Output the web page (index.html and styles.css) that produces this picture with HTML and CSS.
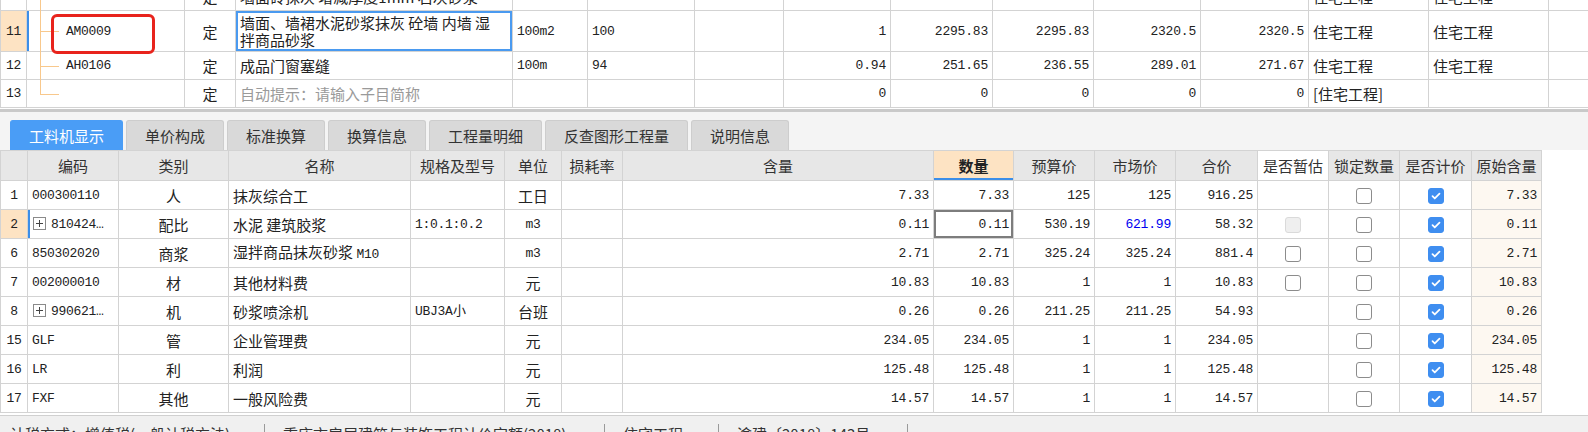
FILE: index.html
```html
<!DOCTYPE html>
<html lang="zh-CN">
<head>
<meta charset="utf-8">
<title>工料机显示</title>
<link rel="stylesheet" href="styles.css">
</head>
<body>
<div class="app">
  <div class="top-grid">
    <table class="grid top">
      <colgroup>
        <col class="w26"><col class="w158"><col class="w51"><col class="w277"><col class="w75"><col class="w107"><col class="w89"><col class="w107"><col class="w102"><col class="w101"><col class="w107"><col class="w108"><col class="w120"><col class="w120"><col class="w40">
      </colgroup>
      <tr>
        <td class="c m">10</td>
        <td class="tree m"><span class="vline"></span><span class="hline"></span>AM0008</td>
        <td class="c">定</td>
        <td>墙面砖抹灰 增减厚度1mm 石灰砂浆</td>
        <td class="m">100m2</td>
        <td class="m">93</td>
        <td></td>
        <td class="n">0.93</td>
        <td class="n">2216.47</td>
        <td class="n">2216.47</td>
        <td class="n">2240.13</td>
        <td class="n">2240.13</td>
        <td>住宅工程</td>
        <td>住宅工程</td>
        <td></td>
      </tr>
      <tr class="tall">
        <td class="c m num-sel">11</td>
        <td class="tree m sel-left"><span class="vline"></span><span class="hline"></span>AM0009<span class="mark"></span></td>
        <td class="c">定</td>
        <td class="cell-sel">墙面、墙裙水泥砂浆抹灰 砼墙 内墙 湿<br>拌商品砂浆</td>
        <td class="m">100m2</td>
        <td class="m">100</td>
        <td></td>
        <td class="n">1</td>
        <td class="n">2295.83</td>
        <td class="n">2295.83</td>
        <td class="n">2320.5</td>
        <td class="n">2320.5</td>
        <td>住宅工程</td>
        <td>住宅工程</td>
        <td></td>
      </tr>
      <tr>
        <td class="c m">12</td>
        <td class="tree m"><span class="vline"></span><span class="hline"></span>AH0106</td>
        <td class="c">定</td>
        <td>成品门窗塞缝</td>
        <td class="m">100m</td>
        <td class="m">94</td>
        <td></td>
        <td class="n">0.94</td>
        <td class="n">251.65</td>
        <td class="n">236.55</td>
        <td class="n">289.01</td>
        <td class="n">271.67</td>
        <td>住宅工程</td>
        <td>住宅工程</td>
        <td></td>
      </tr>
      <tr>
        <td class="c m">13</td>
        <td class="tree m"><span class="vline half"></span><span class="hline"></span></td>
        <td class="c">定</td>
        <td class="hint">自动提示：请输入子目简称</td>
        <td></td>
        <td></td>
        <td></td>
        <td class="n">0</td>
        <td class="n">0</td>
        <td class="n">0</td>
        <td class="n">0</td>
        <td class="n">0</td>
        <td>[住宅工程]</td>
        <td></td>
        <td></td>
      </tr>
    </table>
  </div>

  <div class="tabs">
    <div class="tab active">工料机显示</div>
    <div class="tab">单价构成</div>
    <div class="tab">标准换算</div>
    <div class="tab">换算信息</div>
    <div class="tab">工程量明细</div>
    <div class="tab">反查图形工程量</div>
    <div class="tab">说明信息</div>
  </div>

  <div class="bottom-grid">
    <table class="grid bottom">
      <colgroup>
        <col class="w27"><col class="w91"><col class="w110"><col class="w182"><col class="w94"><col class="w57"><col class="w61"><col class="w311"><col class="w80"><col class="w81"><col class="w81"><col class="w82"><col class="w71"><col class="w71"><col class="w72"><col class="w70">
      </colgroup>
      <tr>
        <th></th><th>编码</th><th>类别</th><th>名称</th><th>规格及型号</th><th>单位</th><th>损耗率</th><th>含量</th><th class="h-qty">数量</th><th>预算价</th><th>市场价</th><th>合价</th><th class="h-white">是否暂估</th><th>锁定数量</th><th>是否计价</th><th>原始含量</th>
      </tr>
      <tr>
        <td class="c m">1</td><td class="m">000300110</td><td class="c">人</td><td>抹灰综合工</td><td></td><td class="c">工日</td><td></td><td class="n">7.33</td><td class="n">7.33</td><td class="n">125</td><td class="n">125</td><td class="n">916.25</td><td></td><td class="c"><span class="cb"></span></td><td class="c"><span class="cb on"><svg viewBox="0 0 16 16"><path d="M4 8.2l2.6 2.6L12 5.4"/></svg></span></td><td class="n orig">7.33</td>
      </tr>
      <tr>
        <td class="c m num-sel">2</td><td class="m sel-left"><span class="plus"><svg viewBox="0 0 13 13"><rect x="0.5" y="0.5" width="12" height="12"/><path d="M3 6.5h7M6.5 3v7"/></svg></span>810424…</td><td class="c">配比</td><td>水泥 建筑胶浆</td><td class="m">1:0.1:0.2</td><td class="c m">m3</td><td></td><td class="n">0.11</td><td class="n qty-sel">0.11</td><td class="n">530.19</td><td class="n blue">621.99</td><td class="n">58.32</td><td class="c"><span class="cb dis"></span></td><td class="c"><span class="cb"></span></td><td class="c"><span class="cb on"><svg viewBox="0 0 16 16"><path d="M4 8.2l2.6 2.6L12 5.4"/></svg></span></td><td class="n orig">0.11</td>
      </tr>
      <tr>
        <td class="c m">6</td><td class="m">850302020</td><td class="c">商浆</td><td>湿拌商品抹灰砂浆 <span class="m">M10</span></td><td></td><td class="c m">m3</td><td></td><td class="n">2.71</td><td class="n">2.71</td><td class="n">325.24</td><td class="n">325.24</td><td class="n">881.4</td><td class="c"><span class="cb"></span></td><td class="c"><span class="cb"></span></td><td class="c"><span class="cb on"><svg viewBox="0 0 16 16"><path d="M4 8.2l2.6 2.6L12 5.4"/></svg></span></td><td class="n orig">2.71</td>
      </tr>
      <tr>
        <td class="c m">7</td><td class="m">002000010</td><td class="c">材</td><td>其他材料费</td><td></td><td class="c">元</td><td></td><td class="n">10.83</td><td class="n">10.83</td><td class="n">1</td><td class="n">1</td><td class="n">10.83</td><td class="c"><span class="cb"></span></td><td class="c"><span class="cb"></span></td><td class="c"><span class="cb on"><svg viewBox="0 0 16 16"><path d="M4 8.2l2.6 2.6L12 5.4"/></svg></span></td><td class="n orig">10.83</td>
      </tr>
      <tr>
        <td class="c m">8</td><td class="m"><span class="plus"><svg viewBox="0 0 13 13"><rect x="0.5" y="0.5" width="12" height="12"/><path d="M3 6.5h7M6.5 3v7"/></svg></span>990621…</td><td class="c">机</td><td>砂浆喷涂机</td><td class="m">UBJ3A小</td><td class="c">台班</td><td></td><td class="n">0.26</td><td class="n">0.26</td><td class="n">211.25</td><td class="n">211.25</td><td class="n">54.93</td><td></td><td class="c"><span class="cb"></span></td><td class="c"><span class="cb on"><svg viewBox="0 0 16 16"><path d="M4 8.2l2.6 2.6L12 5.4"/></svg></span></td><td class="n orig">0.26</td>
      </tr>
      <tr>
        <td class="c m">15</td><td class="m">GLF</td><td class="c">管</td><td>企业管理费</td><td></td><td class="c">元</td><td></td><td class="n">234.05</td><td class="n">234.05</td><td class="n">1</td><td class="n">1</td><td class="n">234.05</td><td></td><td class="c"><span class="cb"></span></td><td class="c"><span class="cb on"><svg viewBox="0 0 16 16"><path d="M4 8.2l2.6 2.6L12 5.4"/></svg></span></td><td class="n orig">234.05</td>
      </tr>
      <tr>
        <td class="c m">16</td><td class="m">LR</td><td class="c">利</td><td>利润</td><td></td><td class="c">元</td><td></td><td class="n">125.48</td><td class="n">125.48</td><td class="n">1</td><td class="n">1</td><td class="n">125.48</td><td></td><td class="c"><span class="cb"></span></td><td class="c"><span class="cb on"><svg viewBox="0 0 16 16"><path d="M4 8.2l2.6 2.6L12 5.4"/></svg></span></td><td class="n orig">125.48</td>
      </tr>
      <tr>
        <td class="c m">17</td><td class="m">FXF</td><td class="c">其他</td><td>一般风险费</td><td></td><td class="c">元</td><td></td><td class="n">14.57</td><td class="n">14.57</td><td class="n">1</td><td class="n">1</td><td class="n">14.57</td><td></td><td class="c"><span class="cb"></span></td><td class="c"><span class="cb on"><svg viewBox="0 0 16 16"><path d="M4 8.2l2.6 2.6L12 5.4"/></svg></span></td><td class="n orig">14.57</td>
      </tr>
    </table>
  </div>

  <div class="status">
    <div class="si s1">计税方式：增值税(一般计税方法)</div>
    <div class="si s2">重庆市房屋建筑与装饰工程计价定额(2018)</div>
    <div class="si s3">住宅工程</div>
    <div class="si s4">渝建〔2018〕143号</div>
  </div>
</div>
</body>
</html>
```

FILE: styles.css
```css
* { box-sizing: border-box; }

body {
  margin: 0;
  width: 1588px;
  height: 432px;
  overflow: hidden;
  background: #fff;
  color: #222;
  font-family: "Noto Sans CJK SC", "Liberation Sans", sans-serif;
  font-size: 15px;
}

.app { width: 1588px; height: 432px; overflow: hidden; }

/* ---------- grids ---------- */
.grid {
  border-collapse: collapse;
  table-layout: fixed;
}
.grid td, .grid th {
  border: 1px solid #d3d3d3;
  padding: 0 4px;
  white-space: nowrap;
  overflow: hidden;
  line-height: 17px;
  vertical-align: middle;
  font-weight: normal;
}

.c { text-align: center; }
.m {
  font-family: "Liberation Mono", "DejaVu Sans Mono", monospace;
  font-size: 13px;
  letter-spacing: -0.3px;
}
.n {
  text-align: right;
  font-family: "Liberation Mono", "DejaVu Sans Mono", monospace;
  font-size: 13px;
  letter-spacing: -0.2px;
}
.blue { color: #0000f0; font-weight: bold; }
.hint { color: #9a9a9a; }

/* column widths */
.w26 { width: 26px; } .w27 { width: 27px; } .w40 { width: 40px; }
.w51 { width: 51px; } .w57 { width: 57px; } .w61 { width: 61px; }
.w70 { width: 70px; } .w71 { width: 71px; } .w72 { width: 72px; }
.w75 { width: 75px; } .w80 { width: 80px; } .w81 { width: 81px; }
.w82 { width: 82px; } .w89 { width: 89px; } .w91 { width: 91px; }
.w94 { width: 94px; } .w101 { width: 101px; } .w102 { width: 102px; }
.w107 { width: 107px; } .w108 { width: 108px; } .w110 { width: 110px; }
.w120 { width: 120px; } .w158 { width: 158px; } .w182 { width: 182px; }
.w277 { width: 277px; } .w311 { width: 311px; }

/* ---------- top grid ---------- */
.top-grid {
  height: 112px;
  overflow: hidden;
  border-bottom: 3px solid #c9c9c9;
}
.top {
  width: 1588px;
  margin-top: -18px;
}
.top tr { height: 28px; }
.top tr.tall { height: 41px; }

.num-sel {
  background: #fde3c3;
  font-weight: bold;
}
.sel-left { box-shadow: inset 2px 0 0 #3c8ee8; }
.cell-sel { box-shadow: inset 0 0 0 2px #4a9af0; }

.grid td.tree {
  position: relative;
  overflow: visible;
  padding-left: 39px;
}
.vline {
  position: absolute;
  left: 13px;
  top: -1px;
  bottom: -1px;
  width: 1px;
  background: #f8c88c;
}
.vline.half { bottom: 50%; }
.hline {
  position: absolute;
  left: 13px;
  top: 50%;
  width: 19px;
  height: 1px;
  background: #f8c88c;
}
.mark {
  position: absolute;
  left: 24px;
  top: 3px;
  width: 104px;
  height: 40px;
  border: 3px solid #e8231c;
  border-radius: 6px;
  z-index: 2;
}

/* ---------- tabs ---------- */
.tabs {
  height: 38px;
  background: #f4f4f4;
  padding: 8px 0 0 10px;
  display: flex;
  align-items: flex-end;
  gap: 3px;
}
.tab {
  height: 30px;
  padding: 0 18px;
  line-height: 30px;
  font-size: 15px;
  color: #333;
  background: #d9d9d9;
  border: 1px solid #cdcdcd;
  border-bottom: none;
  border-radius: 3px 3px 0 0;
}
.tab.active {
  background: #4a9df6;
  border-color: #4a9df6;
  color: #fff;
}

/* ---------- bottom grid ---------- */
.bottom { width: 1541px; }
.bottom th {
  height: 30px;
  background: #e7e7e7;
  color: #333;
  text-align: center;
}
.bottom th.h-qty {
  background: #fde3c3;
  font-weight: bold;
  color: #222;
  box-shadow: inset 0 -2px 0 #3c8ee8;
}
.bottom th.h-white { background: #fff; }
.bottom td { height: 29px; }
.bottom td.orig { background: #fdf8f1; }
.bottom td.qty-sel { box-shadow: inset 0 0 0 2px #7d7d7d; }

.cb {
  display: inline-block;
  width: 16px;
  height: 16px;
  border: 1px solid #8c8c8c;
  border-radius: 3px;
  background: #fff;
  vertical-align: middle;
}
.cb svg { display: block; width: 100%; height: 100%; }
.cb svg path { fill: none; stroke: #fff; stroke-width: 2; stroke-linecap: round; stroke-linejoin: round; }
.cb.on { background: #3f8ef0; border-color: #3f8ef0; }
.cb.dis { background: #efefef; border-color: #dadada; }

.plus {
  display: inline-block;
  width: 13px;
  height: 13px;
  margin: 0 5px 0 1px;
  vertical-align: -2px;
}
.plus svg { display: block; width: 13px; height: 13px; }
.plus rect { fill: #fff; stroke: #8a8a8a; }
.plus path { stroke: #444; stroke-width: 1; }

/* ---------- status bar ---------- */
.status {
  margin-top: 2px;
  height: 18px;
  overflow: hidden;
  background: #f0f0f0;
  border-top: 1px solid #d0d0d0;
  display: flex;
  padding-top: 8px;
  font-size: 15px;
  color: #333;
}
.si {
  height: 24px;
  line-height: 20px;
  padding-left: 18px;
  border-right: 1px solid #9a9a9a;
  white-space: nowrap;
  overflow: hidden;
}
.s1 { width: 265px; padding-left: 10px; }
.s2 { width: 340px; }
.s3 { width: 114px; }
.s4 { width: 189px; }
```
